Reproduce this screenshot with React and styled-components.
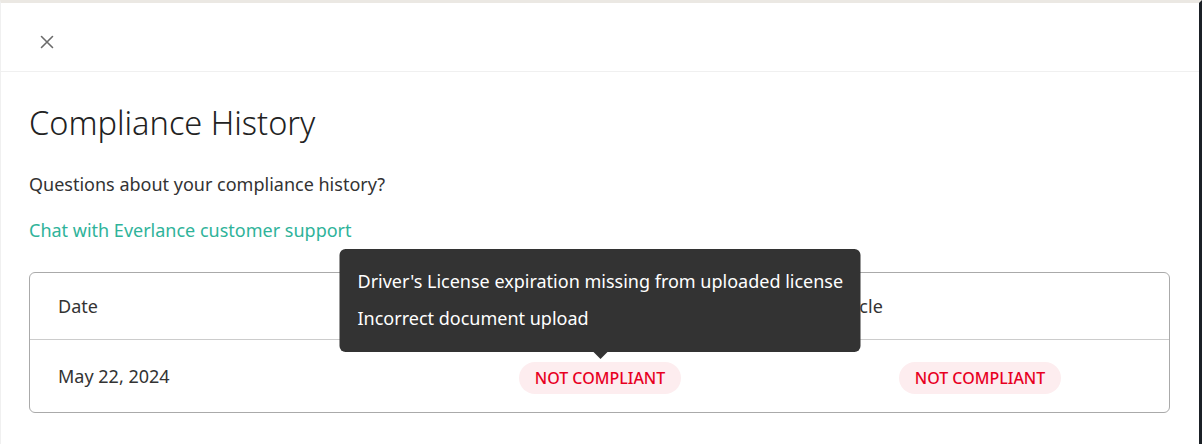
import React from "react";
import styled, { createGlobalStyle } from "styled-components";

const GlobalStyle = createGlobalStyle`
  html, body {
    margin: 0;
    padding: 0;
    background: #ffffff;
  }
  body {
    font-family: "Noto Sans", "Open Sans", sans-serif;
    color: #333333;
  }
`;

const Page = styled.div`
  width: 1202px;
  height: 444px;
  box-sizing: border-box;
  border-top: 3px solid #ebe8e3;
  border-right: 3px solid #1b2026;
  border-left: 1px solid #f0f0f0;
  overflow: hidden;
  display: flex;
  flex-direction: column;
`;

const Header = styled.header`
  height: 69px;
  flex-shrink: 0;
  display: flex;
  align-items: center;
  padding: 10px 0 0 38px;
  box-sizing: border-box;
  border-bottom: 1px solid #f0f0f0;
`;

const CloseButton = styled.button`
  width: 16px;
  height: 16px;
  padding: 0;
  border: none;
  background: none;
  display: flex;
  align-items: center;
  justify-content: center;
  color: #6b6b6b;
  cursor: pointer;
`;

const Body = styled.main`
  padding: 30px 29px 0 28px;
  display: flex;
  flex-direction: column;
`;

const Title = styled.h1`
  margin: 0;
  font-size: 32.5px;
  line-height: 42px;
  font-weight: 300;
  color: #222222;
`;

const Question = styled.p`
  margin: 28px 0 0;
  font-size: 18px;
  line-height: 24px;
  color: #333333;
`;

const SupportLink = styled.a`
  margin-top: 22px;
  font-size: 18px;
  line-height: 24px;
  color: #2fb39a;
  text-decoration: none;
  align-self: flex-start;
`;

const Table = styled.div`
  margin-top: 30px;
  border: 1px solid #aaaaaa;
  border-radius: 6px;
  width: 1141px;
  box-sizing: border-box;
`;

const Row = styled.div`
  display: grid;
  grid-template-columns: 323px 438px 1fr;
  align-items: center;
  padding: 0 28px;
  height: ${(p) => (p.$head ? "66px" : "72px")};
  border-bottom: ${(p) => (p.$head ? "1px solid #cccccc" : "none")};
`;

const Cell = styled.div`
  position: relative;
  font-size: 18px;
  color: #333333;
  display: flex;
  justify-content: ${(p) => (p.$center ? "center" : "flex-start")};
  padding-left: ${(p) => p.$indent || 0}px;
`;

const Badge = styled.span`
  display: inline-flex;
  align-items: center;
  height: 32px;
  margin-top: 3px;
  padding: 0 16px;
  border-radius: 16px;
  background: #fdedef;
  color: #e8001f;
  font-size: 16px;
  font-weight: 500;
`;

const Tooltip = styled.div`
  position: absolute;
  left: 50%;
  bottom: 42px;
  transform: translateX(-50%);
  width: 521px;
  box-sizing: border-box;
  padding: 14px 18px 15px;
  background: #333333;
  border-radius: 6px;
  color: #ffffff;
  font-size: 18px;
  white-space: nowrap;

  &::after {
    content: "";
    position: absolute;
    left: 50%;
    bottom: -7px;
    transform: translateX(-50%);
    border-left: 7px solid transparent;
    border-right: 7px solid transparent;
    border-top: 7px solid #333333;
  }
`;

const TipLine = styled.div`
  line-height: 37px;
`;

export default function App() {
  return (
    <>
      <GlobalStyle />
      <Page>
        <Header>
          <CloseButton aria-label="Close">
            <svg width="14" height="14" viewBox="0 0 14 14" fill="none">
              <path d="M1.5 1.5L12.5 12.5M12.5 1.5L1.5 12.5" stroke="currentColor" strokeWidth="1.6" strokeLinecap="round" />
            </svg>
          </CloseButton>
        </Header>
        <Body>
          <Title>Compliance History</Title>
          <Question>Questions about your compliance history?</Question>
          <SupportLink href="#">Chat with Everlance customer support</SupportLink>
          <Table>
            <Row $head>
              <Cell>Date</Cell>
              <Cell $indent={4}>Driver's License</Cell>
              <Cell $indent={4}>Vehicle</Cell>
            </Row>
            <Row>
              <Cell>May 22, 2024</Cell>
              <Cell $center>
                <Badge>NOT COMPLIANT</Badge>
                <Tooltip>
                  <TipLine>Driver's License expiration missing from uploaded license</TipLine>
                  <TipLine>Incorrect document upload</TipLine>
                </Tooltip>
              </Cell>
              <Cell $center>
                <Badge>NOT COMPLIANT</Badge>
              </Cell>
            </Row>
          </Table>
        </Body>
      </Page>
    </>
  );
}
